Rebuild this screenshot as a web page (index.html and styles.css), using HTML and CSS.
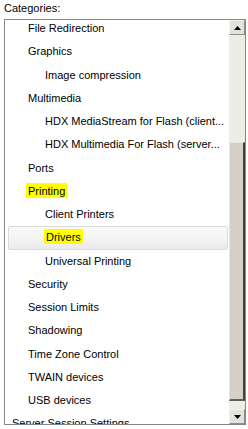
FILE: index.html
```html
<!DOCTYPE html>
<html>
<head>
<meta charset="utf-8">
<link rel="stylesheet" href="styles.css">
</head>
<body>
<div class="label">Categories:</div>
<div class="listbox">
  <div class="items">
    <div class="row l1">File Redirection</div>
    <div class="row l1">Graphics</div>
    <div class="row l2">Image compression</div>
    <div class="row l1">Multimedia</div>
    <div class="row l2">HDX MediaStream for Flash (client...</div>
    <div class="row l2">HDX Multimedia For Flash (server...</div>
    <div class="row l1">Ports</div>
    <div class="row l1"><span class="hl">Printing</span></div>
    <div class="row l2">Client Printers</div>
    <div class="row l2 selected"><span class="hl">Drivers</span></div>
    <div class="row l2">Universal Printing</div>
    <div class="row l1">Security</div>
    <div class="row l1">Session Limits</div>
    <div class="row l1">Shadowing</div>
    <div class="row l1">Time Zone Control</div>
    <div class="row l1">TWAIN devices</div>
    <div class="row l1">USB devices</div>
    <div class="row l0">Server Session Settings</div>
  </div>
  <div class="scrollbar">
    <div class="btn"><svg width="7" height="4" viewBox="0 0 7 4"><path d="M3.5 0 L7 4 L0 4 Z" fill="#000"/></svg></div>
    <div class="track top"></div>
    <div class="thumb"></div>
    <div class="track bottom"></div>
    <div class="btn"><svg width="7" height="4" viewBox="0 0 7 4"><path d="M0 0 L7 0 L3.5 4 Z" fill="#000"/></svg></div>
  </div>
</div>
</body>
</html>
```
FILE: styles.css
```css
html, body {
  margin: 0;
  padding: 0;
  background: #fff;
}
body {
  font-family: "Liberation Sans", Arial, sans-serif;
  font-size: 11px;
  color: #000;
  width: 248px;
  height: 429px;
  overflow: hidden;
}
.label {
  height: 19px;
  line-height: 17px;
  padding-left: 4px;
  color: #000;
}
.listbox {
  margin-left: 4px;
  width: 242px;
  height: 406px;
  box-sizing: border-box;
  border: 1px solid #828790;
  display: flex;
  overflow: hidden;
}
.items {
  flex: 1;
  overflow: hidden;
  padding-top: 0;
}
.row {
  height: 23.25px;
  line-height: 23px;
  white-space: nowrap;
  box-sizing: border-box;
}
.row:first-child {
  margin-top: -3px;
}
.l0 { padding-left: 7px; }
.l1 { padding-left: 23px; }
.l2 { padding-left: 40px; }
.hl {
  background: #ffff00;
  padding: 2px 2px 1px;
  margin-left: -2px;
}
.selected {
  margin: 0 1px 0 3px;
  padding-left: 37px;
  border: 1px solid #d9d9d9;
  border-radius: 2px;
  background: linear-gradient(#f9f9f9, #f4f4f4 50%, #ebebeb);
  line-height: 21px;
}
.scrollbar {
  width: 16px;
  display: flex;
  flex-direction: column;
  background: #eeede5;
}
.btn {
  height: 15px;
  box-sizing: border-box;
  background: #e3e2dc;
  border-top: 1px solid #f4f3ee;
  border-left: 1px solid #f4f3ee;
  border-right: 1px solid #8d8c86;
  border-bottom: 1px solid #8d8c86;
  display: flex;
  align-items: center;
  justify-content: center;
}
.track.top { height: 107px; }
.thumb {
  height: 259px;
  box-sizing: border-box;
  background: #d4d0c8;
  border-top: 1px solid #e8e6df;
  border-left: 1px solid #e8e6df;
  border-right: 2px solid #404040;
  border-bottom: 2px solid #606060;
}
.track.bottom { flex: 1; }
```
